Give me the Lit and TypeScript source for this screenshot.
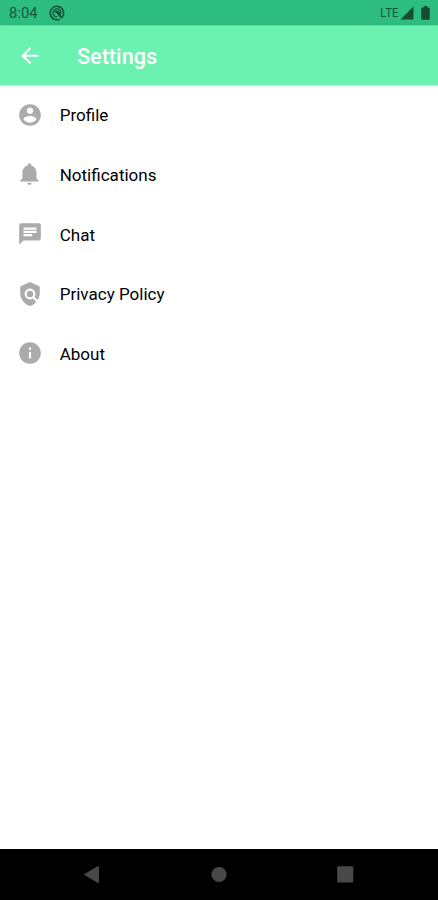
import { LitElement, html, css, svg } from "lit";
import { customElement } from "lit/decorators.js";

const rows = [
  { label: "Profile", icon: svg`<path d="M12 2C6.48 2 2 6.48 2 12s4.48 10 10 10 10-4.48 10-10S17.52 2 12 2zm0 3c1.66 0 3 1.34 3 3s-1.34 3-3 3-3-1.34-3-3 1.34-3 3-3zm0 14.2c-2.5 0-4.71-1.28-6-3.22.03-1.99 4-3.08 6-3.08 1.99 0 5.97 1.09 6 3.08-1.29 1.94-3.5 3.22-6 3.22z"/>` },
  { label: "Notifications", icon: svg`<path d="M11.5 22c1.1 0 2-.9 2-2h-4c0 1.1.9 2 2 2zm6.5-6v-5.5c0-3.07-2.13-5.64-5-6.32V3.5c0-.83-.67-1.5-1.5-1.5S10 2.67 10 3.5v.68c-2.87.68-5 3.25-5 6.32V16l-2 2v1h17v-1l-2-2z"/>` },
  { label: "Chat", icon: svg`<path d="M20 2H4c-1.1 0-1.99.9-1.99 2L2 22l4-4h14c1.1 0 2-.9 2-2V4c0-1.1-.9-2-2-2zM6 9h12v2H6V9zm8 5H6v-2h8v2zm4-6H6V6h12v2z"/>` },
  { label: "Privacy Policy", icon: svg`<path d="M21 5l-9-4-9 4v6c0 5.55 3.84 10.74 9 12 2.3-.56 4.33-1.9 5.88-3.71l-3.12-3.12c-1.94 1.29-4.58 1.07-6.29-.64-1.95-1.95-1.95-5.12 0-7.07 1.95-1.95 5.12-1.95 7.07 0 1.71 1.71 1.92 4.35.64 6.29l2.9 2.9C20.29 15.69 21 13.38 21 11V5z"/><circle cx="12" cy="12" r="3"/>` },
  { label: "About", icon: svg`<path d="M12 2C6.48 2 2 6.48 2 12s4.48 10 10 10 10-4.48 10-10S17.52 2 12 2zm1 15h-2v-6h2v6zm0-8h-2V7h2v2z"/>` },
];

@customElement("app-root")
export class AppRoot extends LitElement {
  static styles = css`
    :host { display: flex; flex-direction: column; width: 438px; height: 900px; background: #fff; font-family: Roboto, sans-serif; overflow: hidden; }
    svg { display: block; flex: none; }
    .status { height: 25px; flex: none; box-sizing: border-box; display: flex; align-items: center; background: #2dbd80; color: #17573b; fill: #144d34; padding: 1px 8px 0 9px; }
    .time { font-size: 14.8px; width: 40px; line-height: 18px; padding-top: 0; }
    .lte { margin-left: auto; font-family: "Noto Sans", sans-serif; font-size: 12px; letter-spacing: -0.45px; margin-right: 2px; line-height: 16px; }
    .battery { margin-left: 7px; }
    .bar { height: 60px; flex: none; box-sizing: border-box; display: flex; align-items: center; padding: 0 17.4px; background: #6bf2b0; color: #fff; fill: #fff; border-top: 1px solid #58dfa0; box-shadow: 0 1px 3px rgba(0,0,0,.15); }
    .title { margin: 3px 0 0 34px; font-size: 21.6px; font-weight: 500; line-height: 26px; letter-spacing: 0.05px; }
    .list { flex: 1; }
    .row { height: 59.65px; display: flex; align-items: center; padding-left: 16.7px; gap: 17px; font-size: 17.05px; color: #000; fill: #ababab; }
    .row span { padding-top: 1px; line-height: 20px; }
    .nav { height: 51px; flex: none; display: flex; align-items: center; background: #000; fill: #484848; }
  `;

  render() {
    return html`
      <div class="status">
        <span class="time">8:04</span>
        <svg width="16" height="16" viewBox="0 0 16 16">
          <path d="M10.6 14.2A6.7 6.7 0 1 1 13.6 11.6" fill="none" stroke="#144d34" stroke-width="1.5"/>
          <path d="M8.2 11.9A4 4 0 1 1 11.9 8.6" fill="none" stroke="#144d34" stroke-width="1.2"/>
          <path d="M4.8 6.5Q8 4.2 11.6 7.8V10l2.3 2.3-1.4 1.4-2.9-2.9Q8.5 8.2 4.8 6.5z"/>
        </svg>
        <span class="lte">LTE</span>
        <svg width="14" height="14" viewBox="0 0 14 14"><path d="M13.5.5v13H.5z"/></svg>
        <svg class="battery" width="9" height="14" viewBox="0 0 9 14"><path d="M2.8 0h3.4v1.4H8q.8 0 .8.8v10.6q0 .9-.9.9H1.1q-.9 0-.9-.9V2.2q0-.8.8-.8h1.8z"/></svg>
      </div>
      <div class="bar">
        <svg width="25.5" height="25.5" viewBox="0 0 24 24"><path d="M20 11H7.83l5.59-5.59L12 4l-8 8 8 8 1.41-1.41L7.83 13H20v-2z"/></svg>
        <div class="title">Settings</div>
      </div>
      <div class="list">
        ${rows.map((r) => html`<div class="row"><svg width="26" height="26" viewBox="0 0 24 24">${r.icon}</svg><span>${r.label}</span></div>`)}
      </div>
      <div class="nav">
        <svg width="438" height="51" viewBox="0 0 438 51">
          <path d="M83.7 25.5L98 17.1q1-.4 1 .6v15.9q0 1-1 .5z"/>
          <circle cx="219" cy="25.5" r="7.6"/>
          <rect x="337.2" y="17.3" width="16.1" height="16.3" rx="1"/>
        </svg>
      </div>`;
  }
}
